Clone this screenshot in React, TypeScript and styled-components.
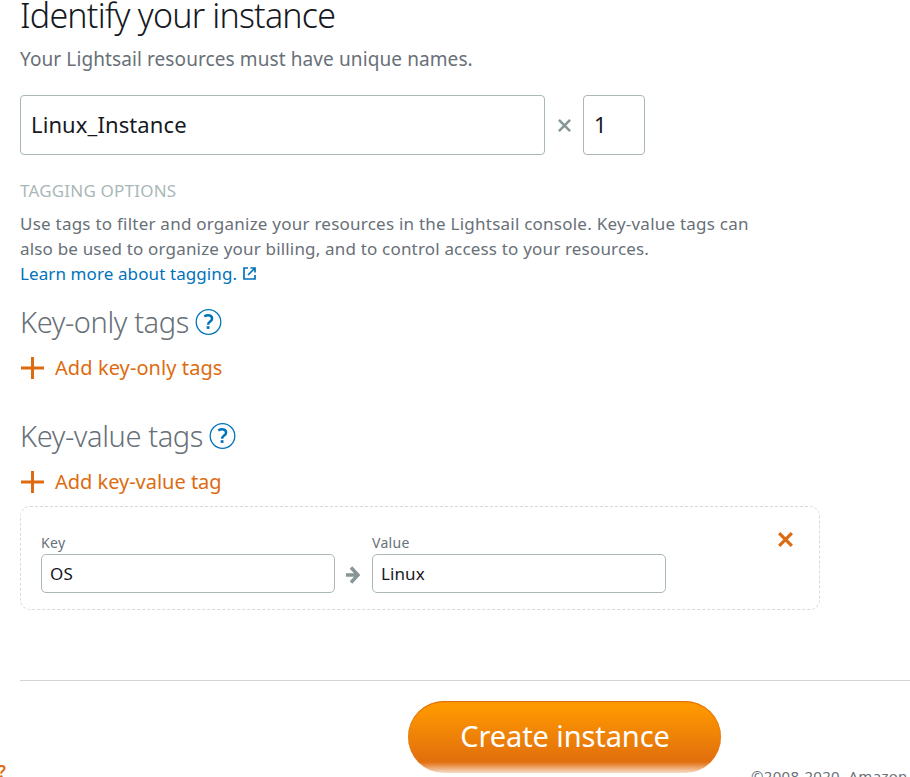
import React from "react";
import styled, { createGlobalStyle } from "styled-components";

const GlobalStyle = createGlobalStyle`
  * { box-sizing: border-box; }
  body { margin: 0; background: #fff; overflow: hidden; }
  p, h1, h2, h3 { margin: 0; font-weight: 400; }
`;

const Page = styled.main`
  height: 777px;
  overflow: hidden;
  padding-left: 20px;
  display: flex;
  flex-direction: column;
  font-family: "Noto Sans", sans-serif;
  color: #687078;
  white-space: nowrap;
`;

const Title = styled.h1`
  height: 45px;
  line-height: 30px;
  font-size: 34px;
  font-weight: 300;
  letter-spacing: -0.78px;
  color: #16191f;
`;

const Lead = styled.p`
  height: 50px;
  line-height: 28px;
  font-size: 19px;
  letter-spacing: 0.1px;
`;

const NameRow = styled.div`
  display: flex;
  align-items: center;
  flex: none;
  height: 60px;
`;

const Field = styled.input<{ $width: number; $size: "large" | "small" }>`
  width: ${(p) => p.$width}px;
  height: ${(p) => (p.$size === "large" ? 60 : 39)}px;
  padding: ${(p) => (p.$size === "large" ? "0 10px 2px" : "0 8px")};
  border: 1px solid #aab7b8;
  border-radius: ${(p) => (p.$size === "large" ? 4 : 5)}px;
  outline: none;
  background: #fff;
  color: #16191f;
  font: 400 ${(p) => (p.$size === "large" ? 22 : 17)}px "Noto Sans", sans-serif;
  letter-spacing: 0.1px;
`;

const Between = styled.span<{ $width: number }>`
  display: flex;
  justify-content: center;
  width: ${(p) => p.$width}px;
`;

const Overline = styled.h3`
  flex: none;
  margin-top: 24px;
  height: 32px;
  line-height: 24px;
  font-size: 17px;
  letter-spacing: 0.2px;
  color: #aab7b8;
`;

const Copy = styled.p<{ $spacing: number }>`
  flex: none;
  height: 25px;
  line-height: 25px;
  font-size: 17px;
  letter-spacing: ${(p) => p.$spacing}px;
`;

const Link = styled.a`
  display: flex;
  flex: none;
  align-items: center;
  gap: 5px;
  height: 25px;
  font-size: 17px;
  letter-spacing: 0.1px;
  color: #0073bb;
`;

const Section = styled.section`
  flex: none;
  height: 114px;
  padding-top: 12px;
`;

const SectionTitle = styled.h2<{ $spacing: number }>`
  display: flex;
  align-items: center;
  gap: 6px;
  height: 46px;
  font-size: 29px;
  font-weight: 300;
  letter-spacing: ${(p) => p.$spacing}px;

  svg { margin-top: 2px; }
`;

const AddButton = styled.button<{ $spacing: number }>`
  display: flex;
  align-items: center;
  gap: 10px;
  height: 46px;
  padding: 0;
  border: 0;
  background: none;
  color: #dd6b10;
  font: 400 20px "Noto Sans", sans-serif;
  letter-spacing: ${(p) => p.$spacing}px;

  svg { margin-top: 1px; }
`;

const TagCard = styled.div`
  display: flex;
  flex: none;
  margin-top: -8px;
  width: 800px;
  height: 104px;
  padding: 25px 20px 0;
  border: 1px dashed #d5dbdb;
  border-radius: 10px;
`;

const Labeled = styled.label`
  display: flex;
  flex-direction: column;
  gap: 1px;
  font-size: 14px;
  line-height: 21px;
  letter-spacing: 0.3px;
`;

const ArrowSlot = styled(Between)`
  padding: 34px 2px 0 0;
`;

const Remove = styled.button`
  margin: -1px 0 0 111px;
  width: 17px;
  height: 17px;
  padding: 0;
  border: 0;
  background: none;
`;

const Divider = styled.hr`
  width: 100%;
  margin: 70px 0 0;
  border: 0;
  border-top: 1px solid #d5d5d5;
`;

const Footer = styled.footer`
  display: flex;
  height: 96px;
  flex: none;
`;

const Overflowing = styled.span`
  flex: none;
  width: 20px;
  margin: 79px 0 0 -22px;
  font-size: 17px;
  line-height: 24px;
  font-weight: 600;
  color: #dd6b10;
`;

const Create = styled.button`
  flex: none;
  margin: 20px 0 0 390px;
  width: 313px;
  height: 72px;
  padding: 0 0 3px 1px;
  border: 0;
  border-radius: 36px;
  background: linear-gradient(#ff9900 0, #ff9900 5px, #e16f0d 60px, #e4771d 62px, #f7dcc8 72px);
  box-shadow: inset 0 1px 1px #db6b0c;
  color: #fff;
  font: 400 29px "Noto Sans", sans-serif;
  letter-spacing: -0.1px;
`;

const Copyright = styled.small`
  margin: 85px 0 0 30px;
  font-size: 15px;
  line-height: 20px;
  letter-spacing: 0.3px;
`;

const Help = () => (
  <svg width="27" height="28" viewBox="0 0 27 28" fill="none" stroke="#0073bb">
    <circle cx="13.5" cy="14" r="12.3" strokeWidth="1.3" />
    <path d="M9.3 8.3c3.6-1.9 7.8-1.1 7.8 2.1 0 3.4-4 2.8-4 6.3" strokeWidth="2.5" />
    <path d="M13.1 18.2v2.7" strokeWidth="2.8" />
  </svg>
);

const Plus = () => (
  <svg width="25" height="24" viewBox="0 0 25 24">
    <path d="M1 12h23M12.5 1v22" stroke="#dd6b10" strokeWidth="3" />
  </svg>
);

const Cross = ({ size, color, weight }: { size: number; color: string; weight: number }) => (
  <svg width={size} height={size} viewBox="0 0 18 18" display="block">
    <path d="M2.3 2.3 15.7 15.7M15.7 2.3 2.3 15.7" stroke={color} strokeWidth={weight} />
  </svg>
);

const Arrow = () => (
  <svg width="16" height="18" viewBox="0 0 16 18" fill="none" stroke="#879596" strokeWidth="3.4">
    <path d="M1 9h12M6 1.5 13 9l-7 7.5" />
  </svg>
);

const External = () => (
  <svg width="15" height="15" viewBox="0 0 15 15" fill="none" stroke="#0073bb" strokeWidth="1.7">
    <path d="M6 2H2v11h11V9M8.5 2H13v4.5M13 2 6 9" />
  </svg>
);

export default function App() {
  return (
    <Page>
      <GlobalStyle />
      <Title>Identify your instance</Title>
      <Lead>Your Lightsail resources must have unique names.</Lead>
      <NameRow>
        <Field $width={525} $size="large" defaultValue="Linux_Instance" />
        <Between $width={38}><Cross size={15} color="#879596" weight={3} /></Between>
        <Field $width={62} $size="large" defaultValue="1" />
      </NameRow>
      <Overline>TAGGING OPTIONS</Overline>
      <Copy $spacing={0.235}>Use tags to filter and organize your resources in the Lightsail console. Key-value tags can</Copy>
      <Copy $spacing={0.18}>also be used to organize your billing, and to control access to your resources.</Copy>
      <Link>Learn more about tagging. <External /></Link>
      <Section>
        <SectionTitle $spacing={-0.4}>Key-only tags <Help /></SectionTitle>
        <AddButton $spacing={0.08}><Plus />Add key-only tags</AddButton>
      </Section>
      <Section>
        <SectionTitle $spacing={-0.4}>Key-value tags <Help /></SectionTitle>
        <AddButton $spacing={-0.02}><Plus />Add key-value tag</AddButton>
      </Section>
      <TagCard>
        <Labeled>Key<Field $width={294} $size="small" defaultValue="OS" /></Labeled>
        <ArrowSlot $width={37}><Arrow /></ArrowSlot>
        <Labeled>Value<Field $width={294} $size="small" defaultValue="Linux" /></Labeled>
        <Remove aria-label="Remove tag"><Cross size={17} color="#dd6b10" weight={3.4} /></Remove>
      </TagCard>
      <Divider />
      <Footer>
        <Overflowing>?</Overflowing>
        <Create>Create instance</Create>
        <Copyright>©2008-2020, Amazon Web Services</Copyright>
      </Footer>
    </Page>
  );
}
